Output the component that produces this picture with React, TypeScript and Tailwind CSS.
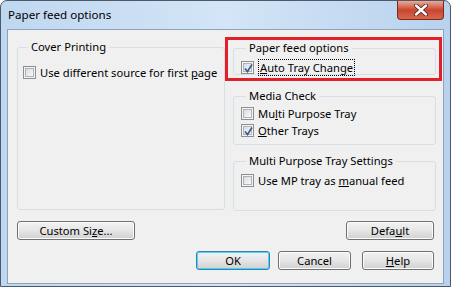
import React from "react";

function CheckBox({ checked = false }: { checked?: boolean }) {
  return (
    <span className="relative flex h-[13px] w-[13px] shrink-0 border border-[#8e8f8f] bg-[#f4f4f4] p-[1px]">
      <span className="block h-full w-full border border-[#aeb3b9] bg-gradient-to-br from-[#d9dbdd] to-[#fafafa]" />
      {checked && (
        <svg className="absolute left-[1px] top-[1px]" width="11" height="11" viewBox="0 0 11 11">
          <path d="M2 5.5 L4.5 8.5 L9 1.5" fill="none" stroke="#3c5c94" strokeWidth="1.7" />
        </svg>
      )}
    </span>
  );
}

function Option({ checked, children }: { checked?: boolean; children: React.ReactNode }) {
  return (
    <div className="flex h-[17px] items-center gap-[4px] whitespace-nowrap">
      <CheckBox checked={checked} />
      <span className="leading-[15px]">{children}</span>
    </div>
  );
}

function Group({ title, className, children }: { title: string; className: string; children?: React.ReactNode }) {
  return (
    <fieldset className={`rounded-[3px] border border-[#d5dfe5] ${className}`}>
      <legend className="ml-[5px] whitespace-nowrap px-[3px] leading-[16px]">{title}</legend>
      {children}
    </fieldset>
  );
}

function Button({ label, className = "", isDefault = false }: { label: React.ReactNode; className?: string; isDefault?: boolean }) {
  return (
    <div
      className={`flex h-[19px] items-center justify-center whitespace-nowrap rounded-[3px] border ${
        isDefault ? "border-[#3c7fb1] shadow-[inset_0_0_0_1px_#48d4f7]" : "border-[#707070] shadow-[inset_0_0_0_1px_#fcfcfc]"
      } bg-gradient-to-b from-[#f2f2f2] via-[#e6e6e6] to-[#d0d0d0] leading-[15px] ${className}`}
    >
      {label}
    </div>
  );
}

export default function App() {
  return (
    <div className="h-[287px] w-[451px] overflow-hidden rounded-t-[7px] border border-[#4d5966] bg-gradient-to-r from-[#bfd7f0] via-[#d3e5f7] to-[#b8d2ed] font-['Noto_Sans',sans-serif] text-[11.2px] text-black">
      <div className="flex h-[28px] items-start justify-between">
        <span className="pl-[7px] pt-[6px] text-[11.6px] leading-[16px]">Paper feed options</span>
        <div className="mr-[6px] flex h-[19px] w-[47px] items-center justify-center rounded-b-[4px] border border-t-0 border-[#7a2a1c] bg-gradient-to-b from-[#e9a99a] via-[#c8452f] to-[#d9664a]">
          <svg width="14" height="12" viewBox="0 0 14 12">
            <path d="M2 1.5 L12 10.5 M12 1.5 L2 10.5" stroke="#4a1d16" strokeWidth="4" strokeLinecap="round" />
            <path d="M2 1.5 L12 10.5 M12 1.5 L2 10.5" stroke="#ffffff" strokeWidth="2.4" strokeLinecap="round" />
          </svg>
        </div>
      </div>
      <div className="relative mx-[6px] flex h-[255px] flex-col border border-[#8ea3b9] bg-[#f0f0f0]">
        <div className="flex items-start">
          <Group title="Cover Printing" className="ml-[9px] mt-[9px] h-[171px] w-[208px] pl-[5px] pt-[9px]">
            <Option>
              Use different source for first <span className="underline">p</span>age
            </Option>
          </Group>
          <div className="ml-[8px] mt-[10px] flex w-[203px] flex-col">
            <Group title="Paper feed options" className="h-[35px] pl-[7px] pt-[3px]">
              <Option checked>
                <span className="border border-dotted border-black px-[1px]">
                  <span className="underline">A</span>uto Tray Change
                </span>
              </Option>
            </Group>
            <Group title="Media Check" className="mt-[13px] h-[57px] pl-[7px] pt-[1px]">
              <Option>
                Mu<span className="underline">l</span>ti Purpose Tray
              </Option>
              <Option checked>
                <span className="underline">O</span>ther Trays
              </Option>
            </Group>
            <Group title="Multi Purpose Tray Settings" className="mt-[8px] h-[58px] pl-[7px] pt-[3px]">
              <Option>
                Use MP tray as <span className="underline">m</span>anual feed
              </Option>
            </Group>
          </div>
        </div>
        <div className="mt-[10px] flex justify-between px-[9px]">
          <Button
            className="w-[118px]"
            label={
              <span>
                Custom Si<span className="underline">z</span>e...
              </span>
            }
          />
          <Button
            className="w-[88px]"
            label={
              <span>
                Defa<span className="underline">u</span>lt
              </span>
            }
          />
        </div>
        <div className="mt-[11px] flex justify-end pr-[9px]">
          <Button isDefault className="w-[74px]" label="OK" />
          <Button className="ml-[8px] w-[73px]" label="Cancel" />
          <Button
            className="ml-[11px] w-[72px]"
            label={
              <span>
                <span className="underline">H</span>elp
              </span>
            }
          />
        </div>
        <div className="pointer-events-none absolute left-[217px] top-[7px] h-[44px] w-[217px] border-[3px] border-[#e2202a]" />
      </div>
    </div>
  );
}
